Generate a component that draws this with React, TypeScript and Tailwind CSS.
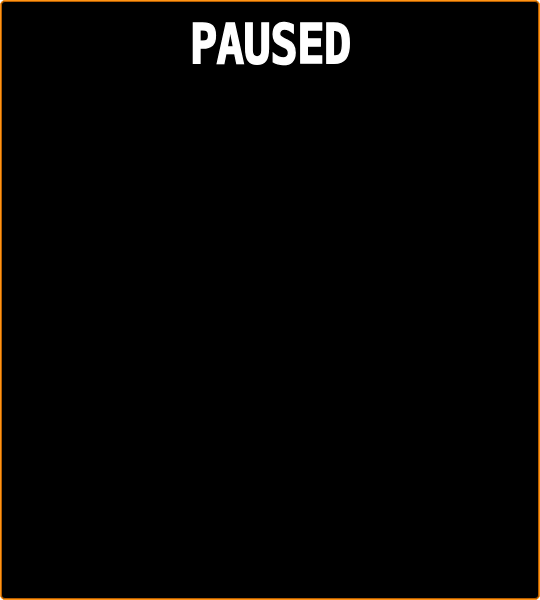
export default function App() {
  return (
    <div className="w-[540px] h-[600px] bg-black border border-[#ff9416] shadow-[inset_0_0_0_1px_#b85f00] rounded-[5px] flex flex-col items-center">
      <div
        className="mt-[13px] text-white text-[56px] leading-[60px] font-bold scale-x-[0.82] tracking-[-1px] [-webkit-text-stroke:1.5px_white]"
        style={{ fontFamily: '"DejaVu Sans Mono", monospace' }}
      >
        PAUSED
      </div>
    </div>
  );
}
